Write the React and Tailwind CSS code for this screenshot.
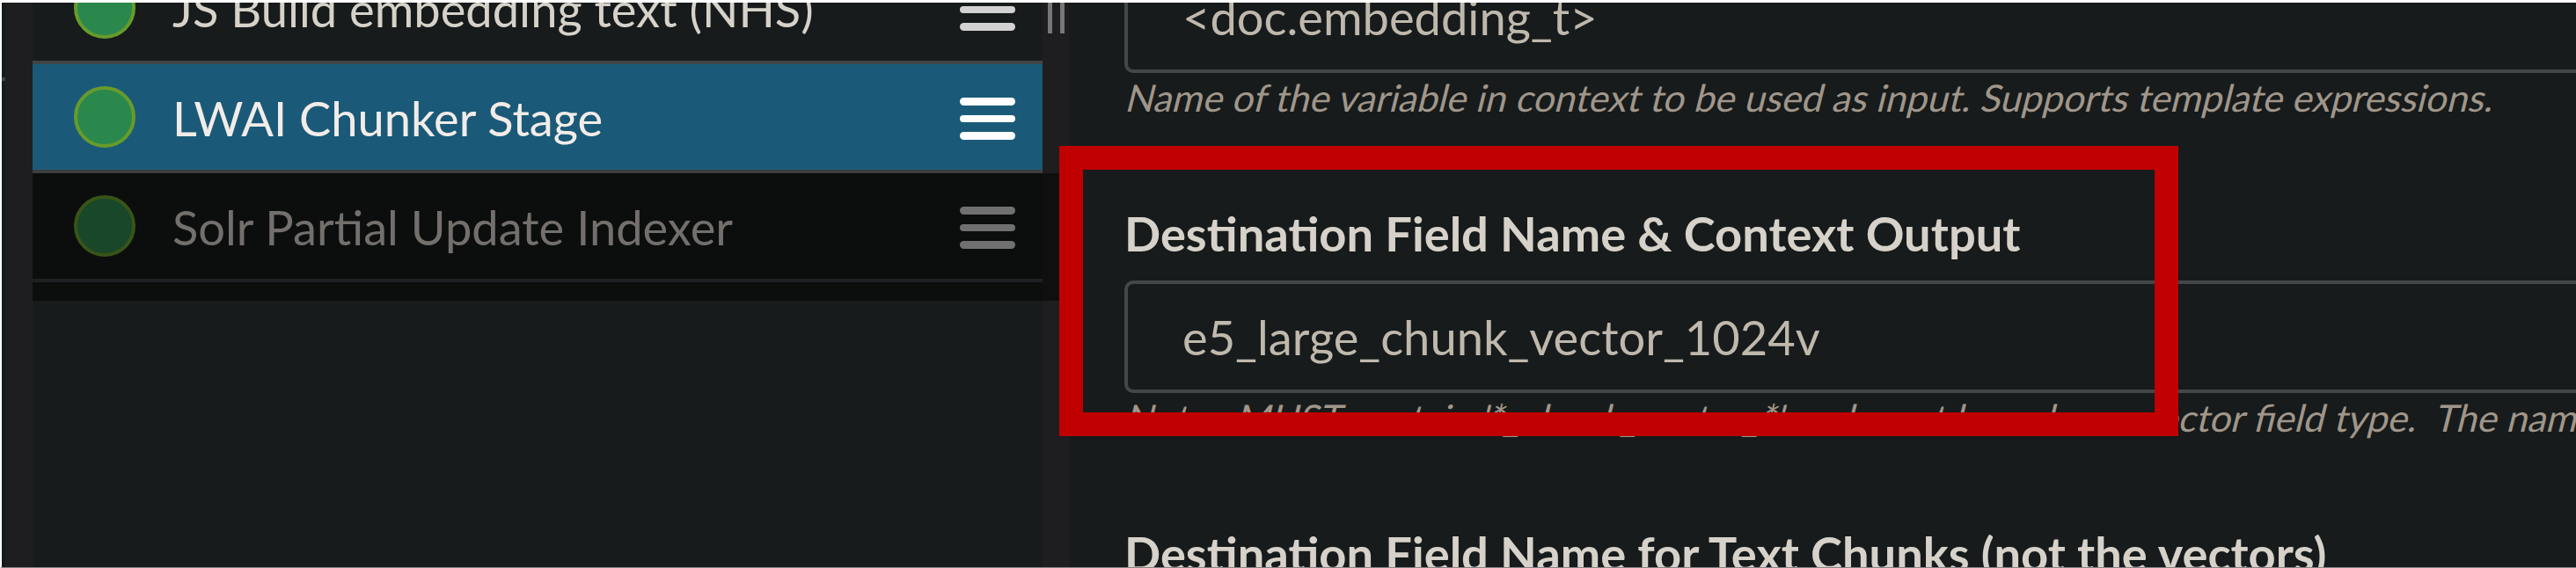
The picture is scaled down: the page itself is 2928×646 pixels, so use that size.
function Handle({ color }) {
  return (
    <div className="mt-[3.5px] flex w-[63px] flex-col gap-[11px]">
      {[0, 1, 2].map((i) => (
        <span key={i} className={`h-[8.5px] rounded-full ${color}`} />
      ))}
    </div>
  );
}

function Stage({ name, row, dot, text, bar, line }) {
  return (
    <div className="h-[124px] shrink-0">
      <div className={`flex h-[120px] items-center pl-[47px] pr-[31px] ${row}`}>
        <span className={`size-[70px] shrink-0 rounded-full border-4 ${dot}`} />
        <span className={`ml-[42px] grow whitespace-pre pt-[3px] text-[54.25px] leading-none ${text}`}>{name}</span>
        <Handle color={bar} />
      </div>
      <div className={`h-1 ${line}`} />
    </div>
  );
}

function Field({ label, value, hint }) {
  return (
    <div className="flex h-[364px] shrink-0 flex-col whitespace-pre">
      <div className="h-[80px] shrink-0 text-[54.25px] font-bold leading-[52px] text-[#d6d2ca]">{label}</div>
      <div className="flex h-[128px] shrink-0 items-center rounded-l-[10px] border-4 border-r-0 border-[#434748] pl-[62px] text-[54.25px] leading-[66px] text-[#bfb8ad]">
        {value}
      </div>
      <div className="origin-[0_43px] -skew-x-[14deg] pt-px text-[42.63px] leading-[54px] text-[#a0968a]">{hint}</div>
    </div>
  );
}

export default function App() {
  return (
    <div className="relative flex h-[646px] w-[2928px] overflow-hidden border-b border-l-2 border-t-[3px] border-b-[#858385] border-l-white border-t-white bg-[#171b1b] font-['Lato',sans-serif]">
      <div className="w-[4px] shrink-0 pt-[85px]">
        <div className="h-[4px] bg-[#414445]" />
      </div>
      <div className="w-[31px] shrink-0 bg-[#1e1e20]" />
      <div className="flex w-[1148px] shrink-0 flex-col">
        <div className="-mt-[54px] flex flex-col">
          <Stage name="JS Build embedding text (NHS)" row="" dot="border-[#679b2b] bg-[#2a884d]" text="text-[#d6d2ca]" bar="bg-[#d2d2d2]" line="bg-[#414445]" />
          <Stage name="LWAI Chunker Stage" row="bg-[#1a5a78]" dot="border-[#679b2b] bg-[#2a884d]" text="text-[#f2ece8]" bar="bg-white" line="bg-[#3c3e40]" />
          <Stage name="Solr Partial Update Indexer" row="bg-[#0c0e0e]" dot="border-[#385418] bg-[#184729]" text="text-[#726f6c]" bar="bg-[#707070]" line="bg-[#1f2023]" />
          <div className="h-[21px] bg-[#0c0e0e]" />
        </div>
      </div>
      <div className="flex w-[30px] shrink-0 flex-col bg-[#1e1e20]">
        <div className="flex h-[35px] gap-[9px] pl-[6px]">
          <div className="w-[5px] bg-[#777]" />
          <div className="w-[5px] bg-[#777]" />
        </div>
        <div className="mt-[159px] h-[145px] bg-[#0f0f10]" />
      </div>
      <div className="flex grow flex-col overflow-hidden pl-[63px]">
        <div className="-mt-[128px] flex flex-col">
          <Field label="Source" value="<doc.embedding_t>" hint="Name of the variable in context to be used as input. Supports template expressions." />
          <Field
            label="Destination Field Name & Context Output"
            value="e5_large_chunk_vector_1024v"
            hint="Note:  MUST contain '*_chunk_vector_*' and must be a dense vector field type.  The name of the field"
          />
          <Field label="Destination Field Name for Text Chunks (not the vectors)" value="" hint="" />
        </div>
      </div>
      <div className="absolute left-[1201.5px] top-[163px] h-[330px] w-[1272px] border-[27px] border-[#c00000]" />
    </div>
  );
}
